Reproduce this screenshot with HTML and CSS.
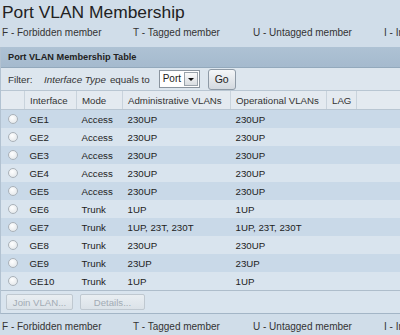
FILE: index.html
```html
<!DOCTYPE html>
<html lang="en">
<head>
    <meta charset="UTF-8">
    <title>Port VLAN Membership</title>
    <link rel="stylesheet" href="styles.css">
</head>
<body>
    <h1 class="title">Port VLAN Membership</h1>
    <div class="legend">
        <span class="legend-item">F - Forbidden member</span>
        <span class="legend-item mid">T - Tagged member</span>
        <span class="legend-item">U - Untagged member</span>
        <span class="legend-item">I - Included member</span>
    </div>

    <div class="panel">
        <div class="panel-head">Port VLAN Membership Table</div>
        <div class="filter">
            <span class="filter-label">Filter:</span>
            <em class="filter-field">Interface Type</em>
            <span>equals to</span>
            <span class="select">
                <span class="select-value">Port</span>
                <span class="select-arrow"></span>
            </span>
            <button type="button" class="go">Go</button>
        </div>
        <table class="grid">
            <thead>
                <tr>
                    <th class="c-radio"></th>
                    <th class="c-iface">Interface</th>
                    <th class="c-mode">Mode</th>
                    <th class="c-admin">Administrative VLANs</th>
                    <th class="c-oper">Operational VLANs</th>
                    <th class="c-lag">LAG</th>
                    <th></th>
                </tr>
            </thead>
            <tbody id="rows"></tbody>
        </table>
        <div class="actions">
            <button type="button" class="btn" disabled>Join VLAN...</button>
            <button type="button" class="btn details" disabled>Details...</button>
        </div>
    </div>

    <div class="legend bottom">
        <span class="legend-item">F - Forbidden member</span>
        <span class="legend-item mid">T - Tagged member</span>
        <span class="legend-item">U - Untagged member</span>
        <span class="legend-item">I - Included member</span>
    </div>

    <script>
        const ports = [
            ["GE1", "Access", "230UP", "230UP"],
            ["GE2", "Access", "230UP", "230UP"],
            ["GE3", "Access", "230UP", "230UP"],
            ["GE4", "Access", "230UP", "230UP"],
            ["GE5", "Access", "230UP", "230UP"],
            ["GE6", "Trunk", "1UP", "1UP"],
            ["GE7", "Trunk", "1UP, 23T, 230T", "1UP, 23T, 230T"],
            ["GE8", "Trunk", "230UP", "230UP"],
            ["GE9", "Trunk", "23UP", "23UP"],
            ["GE10", "Trunk", "1UP", "1UP"]
        ];

        const tbody = document.getElementById('rows');
        ports.forEach((p) => {
            const tr = document.createElement('tr');
            tr.innerHTML = `
                <td class="c-radio"><span class="radio"></span></td>
                <td>${p[0]}</td>
                <td>${p[1]}</td>
                <td>${p[2]}</td>
                <td>${p[3]}</td>
                <td></td>
                <td></td>
            `;
            tbody.appendChild(tr);
        });
    </script>
</body>
</html>
```

FILE: styles.css
```css
:root {
    --page-bg: #d0dde9;
    --band: #aabfd1;
    --filter-bg: #dde6ee;
    --head-bg: #e4eaf0;
    --row-dark: #c9d9e8;
    --row-light: #d9e4ee;
    --line: #a3b5c6;
    --text: #2a2a2a;
}
body {
    margin: 0;
    background-color: var(--page-bg);
    color: var(--text);
    font-family: "Liberation Sans", Arial, sans-serif;
    overflow: hidden;
    width: 400px;
}
.title {
    margin: 0;
    padding-left: 2px;
    height: 23px;
    line-height: 24px;
    font-size: 17.4px;
    font-weight: normal;
    color: #222;
    white-space: nowrap;
}
.legend {
    display: flex;
    height: 20px;
    line-height: 20px;
    font-size: 10px;
    color: #333;
    white-space: nowrap;
    padding-left: 2px;
    overflow: hidden;
}
.legend-item {
    flex: none;
    width: 131px;
}
.legend-item.mid {
    width: 120px;
}
.legend.bottom {
    margin-top: 3px;
}
.panel {
    margin-top: 4px;
    border-left: 1px solid #b2c2d1;
    border-bottom: 1px solid var(--line);
    width: 460px;
}
.panel-head {
    height: 20px;
    line-height: 20px;
    padding-left: 7px;
    background: linear-gradient(#aec2d4, #a5bace);
    border-bottom: 1px solid #93a9bc;
    font-size: 9.2px;
    font-weight: bold;
    color: #222;
}
.filter {
    display: flex;
    align-items: center;
    height: 22px;
    padding-left: 7px;
    background-color: var(--filter-bg);
    font-size: 9.8px;
    color: #333;
}
.filter-label {
    width: 36px;
}
.filter-field {
    margin-right: 4px;
}
.select {
    display: flex;
    align-items: stretch;
    margin-left: 9px;
    width: 39px;
    height: 16px;
    background: white;
    border: 1px solid #8a949e;
}
.select-value {
    flex: 1;
    padding-left: 3px;
    line-height: 16px;
    font-size: 10px;
    color: #222;
}
.select-arrow {
    position: relative;
    width: 12px;
    margin: 1px;
    background: linear-gradient(#fafafa, #d9dde1);
    border: 1px solid #9aa3ab;
}
.select-arrow::after {
    content: "";
    position: absolute;
    left: 3px;
    top: 5px;
    border-left: 3px solid transparent;
    border-right: 3px solid transparent;
    border-top: 3px solid #111;
}
.go {
    margin-left: 8px;
    width: 28px;
    height: 21px;
    padding: 0;
    font-family: inherit;
    font-size: 10.5px;
    color: #222;
    background: linear-gradient(#f4f6f8, #d3d9df);
    border: 1px solid #8e9aa6;
    border-radius: 3px;
}
.grid {
    border-collapse: collapse;
    width: 100%;
    table-layout: fixed;
    font-size: 9.7px;
}
.grid th {
    height: 18px;
    padding: 0 0 0 5px;
    text-align: left;
    font-weight: normal;
    color: #333;
    background-color: var(--head-bg);
    border-top: 1px solid #b9c6d2;
    border-bottom: 1px solid #b9c6d2;
    border-left: 1px solid #c9d3dc;
}
.grid th:first-child {
    border-left: none;
}
.grid td {
    height: 18px;
    padding: 0 0 0 5px;
    color: #222;
    white-space: nowrap;
}
.grid tbody tr:nth-child(odd) {
    background-color: var(--row-dark);
}
.grid tbody tr:nth-child(even) {
    background-color: var(--row-light);
}
.c-radio { width: 18px; }
.c-iface { width: 46px; }
.c-mode { width: 40px; }
.c-admin { width: 102px; }
.c-oper { width: 90px; }
.c-lag { width: 24px; }
.grid td.c-radio {
    padding-left: 7px;
}
.radio {
    display: block;
    width: 8px;
    height: 8px;
    border-radius: 50%;
    border: 1px solid #a9b1b9;
    background: radial-gradient(circle at 40% 35%, #ffffff, #dde2e6);
}
.actions {
    display: flex;
    gap: 7px;
    height: 22px;
    align-items: center;
    padding-left: 5px;
    background-color: var(--row-light);
    border-top: 1px solid #aebdcb;
}
.btn {
    height: 16px;
    padding: 0;
    width: 67px;
    font-family: inherit;
    font-size: 9.6px;
    color: #a2abb4;
    background: linear-gradient(#e9eef2, #dbe2e8);
    border: 1px solid #bfc8d0;
    border-radius: 2px;
}
.btn.details {
    width: 65px;
}
```
